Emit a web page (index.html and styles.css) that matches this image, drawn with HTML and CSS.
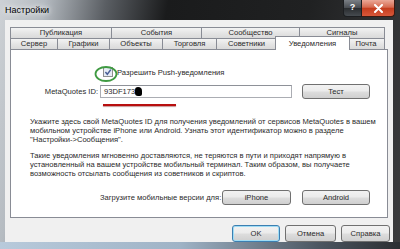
FILE: index.html
```html
<!DOCTYPE html>
<html>
<head>
    <title>Настройки</title>
    <link rel="stylesheet" href="styles.css">
</head>
<body>
    <div class="window">
        <div class="titlebar">
            <span class="title">Настройки</span>
            <div class="caption-btns">
                <span class="cap-help">?</span>
                <span class="cap-close">
                    <svg width="11" height="9" viewBox="0 0 11 9"><path d="M2 1 L9 8 M9 1 L2 8" stroke="#fff" stroke-width="2" stroke-linecap="round"/></svg>
                </span>
            </div>
        </div>
        <div class="client">
            <div class="tabs">
                <div class="tab-row row-top">
                    <div class="tab">Публикация</div>
                    <div class="tab">События</div>
                    <div class="tab">Сообщество</div>
                    <div class="tab">Сигналы</div>
                </div>
                <div class="tab-row row-bottom">
                    <div class="tab">Сервер</div>
                    <div class="tab">Графики</div>
                    <div class="tab">Объекты</div>
                    <div class="tab">Торговля</div>
                    <div class="tab">Советники</div>
                    <div class="tab active">Уведомления</div>
                    <div class="tab">Почта</div>
                </div>
            </div>
            <div class="panel">
                <div class="check-row">
                    <span class="checkbox">
                        <svg width="10" height="10" viewBox="0 0 10 10"><rect x="0.5" y="0.5" width="9" height="9" fill="#e6ecf5" stroke="#8e8f8f"/><path d="M2.4 5 L4.3 7.2 L7.8 2.6" fill="none" stroke="#4a5f97" stroke-width="1.5"/></svg>
                    </span>
                    <span>Разрешить Push-уведомления</span>
                </div>
                <div class="id-row">
                    <span class="id-label">MetaQuotes ID:</span>
                    <div class="input">93DF173<span class="blot"></span></div>
                    <button class="btn btn-test">Тест</button>
                </div>
                <p class="note first">Укажите здесь свой MetaQuotes ID для получения уведомлений от сервисов MetaQuotes в вашем<br>мобильном устройстве iPhone или Android. Узнать этот идентификатор можно в разделе<br>"Настройки-&gt;Сообщения".</p>
                <p class="note">Такие уведомления мгновенно доставляются, не теряются в пути и приходят напрямую в<br>установленный на вашем устройстве мобильный терминал. Таким образом, вы получаете<br>возможность отсылать сообщения из советников и скриптов.</p>
                <div class="download-row">
                    <span class="download-label">Загрузите мобильные версии для:</span>
                    <button class="btn btn-iphone">iPhone</button>
                    <button class="btn btn-android">Android</button>
                </div>

                <!-- пометки поверх скриншота -->
                <svg class="mark-circle" width="26" height="18" viewBox="0 0 26 18"><ellipse cx="13" cy="9" rx="10.5" ry="7" fill="none" stroke="#3f9a42" stroke-width="1.8"/></svg>
                <span class="mark-line"></span>
            </div>
            <div class="dialog-btns">
                <button class="btn btn-default">OK</button>
                <button class="btn btn-cancel">Отмена</button>
                <button class="btn btn-help">Справка</button>
            </div>
        </div>
    </div>
</body>
</html>
```

FILE: styles.css
```css
body {
    margin: 0;
    font-family: "Liberation Sans", Tahoma, Arial, sans-serif;
    font-size: 7.6px;
    color: #2a2a2a;
}
.window {
    width: 400px;
    height: 249px;
    display: flex;
    flex-direction: column;
    background:
        linear-gradient(90deg, #b8cadb 0%, #9fb3c6 45%, #4b5560 80%, #2b2e32 100%) bottom / 100% 7px no-repeat,
        linear-gradient(100deg, #cdd1d5 0%, #b5bbc1 10%, #5a5e63 24%, #1a1b1c 38%, #202122 70%, #3b3c3e 100%);
}
.titlebar {
    height: 20px;
    display: flex;
    align-items: flex-start;
}
.title {
    padding-left: 5px;
    line-height: 21px;
    font-size: 9px;
    color: #000;
    text-shadow: 0 0 5px #fff, 0 0 8px #fff;
}
.caption-btns {
    margin-left: auto;
    margin-right: 5px;
    display: flex;
    height: 17px;
}
.cap-help {
    width: 17px;
    border: 1px solid #1c1e21;
    border-top: none;
    border-radius: 0 0 0 4px;
    background: linear-gradient(#7a7f85, #4a4e53 48%, #2a2d30 52%, #464b50);
    color: #fff;
    font-weight: bold;
    font-size: 9px;
    text-align: center;
    line-height: 15px;
}
.cap-close {
    width: 32px;
    border: 1px solid #3b1a12;
    border-top: none;
    border-left: none;
    border-radius: 0 0 4px 0;
    background: linear-gradient(#eba897, #d66a50 45%, #c53d1e 52%, #d8583a);
    display: flex;
    align-items: center;
    justify-content: center;
}
.client {
    flex: 1;
    margin: 0 7px 7px 5px;
    padding: 7px 5px 0 5px;
    background: #f0f0f0;
    display: flex;
    flex-direction: column;
}
.tab-row {
    display: grid;
    height: 11px;
}
.row-top {
    grid-template-columns: 102px 90px 98px 85px;
}
.row-bottom {
    grid-template-columns: 48px 52px 53px 54px 60px 71px 37px;
}
.tab {
    border-top: 1px solid #898c95;
    border-right: 1px solid #898c95;
    background: linear-gradient(#f3f3f3, #e5e5e5 50%, #dadada);
    text-align: center;
    line-height: 10px;
    color: #2a2a2a;
    white-space: nowrap;
}
.tab:first-child {
    border-left: 1px solid #898c95;
}
.tab.active {
    position: relative;
    z-index: 1;
    margin: -2px -2px -1px -2px;
    border-left: 1px solid #898c95;
    background: #fff;
    line-height: 13px;
}
.panel {
    position: relative;
    height: 169px;
    box-sizing: border-box;
    border: 1px solid #898c95;
    background: #fff;
    display: flex;
    flex-direction: column;
}
.check-row {
    margin-top: 17px;
    padding-left: 92px;
    height: 10px;
    display: flex;
    align-items: center;
    gap: 4px;
}
.checkbox {
    display: flex;
}
.id-row {
    margin-top: 7px;
    height: 15px;
    display: flex;
    align-items: center;
}
.id-label {
    width: 87px;
    text-align: right;
    margin-right: 2px;
}
.input {
    width: 192px;
    height: 13px;
    box-sizing: border-box;
    border: 1px solid #abadb3;
    border-top-color: #8e9198;
    padding-left: 3px;
    line-height: 11px;
    display: flex;
    align-items: center;
}
.blot {
    width: 7px;
    height: 9px;
    background: #000;
    border-radius: 3px 4px 2px 3px;
}
.btn {
    font-family: "Liberation Sans", Tahoma, Arial, sans-serif;
    font-size: 7.6px;
    color: #2a2a2a;
    height: 15px;
    padding: 0;
    box-sizing: border-box;
    border: 1px solid #707070;
    border-radius: 3px;
    background: linear-gradient(#f2f2f2, #ebebeb 48%, #dddddd 52%, #cfcfcf);
}
.btn-test {
    width: 68px;
    margin-left: 10px;
}
.note {
    margin: 7px 0 0 0;
    padding-left: 19px;
    line-height: 9px;
    white-space: nowrap;
}
.note.first {
    margin-top: 18px;
}
.download-row {
    margin-top: 12px;
    padding-left: 89px;
    height: 15px;
    display: flex;
    align-items: center;
}
.download-label {
    width: 122px;
    white-space: nowrap;
}
.btn-iphone {
    width: 69px;
}
.btn-android {
    width: 68px;
    margin-left: 11px;
}
.dialog-btns {
    margin-top: 7px;
    margin-right: -2px;
    display: flex;
    justify-content: flex-end;
    gap: 5px;
}
.dialog-btns .btn {
    height: 17px;
}
.btn-default {
    width: 48px;
    border-color: #3c7fb1;
    box-shadow: inset 0 0 0 1px #9fdcf5;
}
.btn-cancel {
    width: 51px;
}
.btn-help {
    width: 49px;
}
.mark-circle {
    position: absolute;
    left: 82px;
    top: 15px;
}
.mark-line {
    position: absolute;
    left: 92px;
    top: 54px;
    width: 73px;
    height: 2px;
    background: #b80f0f;
    box-shadow: 0 1px 1px rgba(120, 0, 0, 0.4);
}
```
